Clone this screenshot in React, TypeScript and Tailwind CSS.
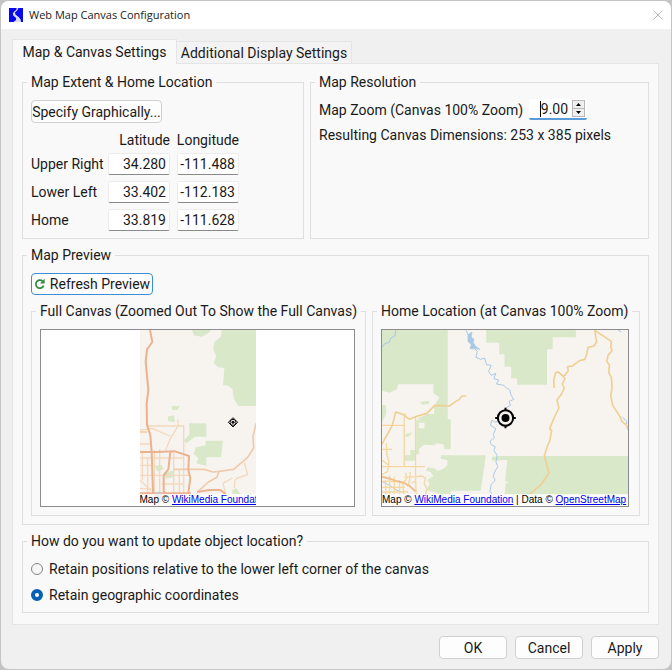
import { useState } from 'react';
import type { ReactNode } from 'react';
import clsx from 'clsx';

type Extent = { name: string; latitude: string; longitude: string };

const initialExtents: Extent[] = [
  { name: 'Upper Right', latitude: '34.280', longitude: '-111.488' },
  { name: 'Lower Left', latitude: '33.402', longitude: '-112.183' },
  { name: 'Home', latitude: '33.819', longitude: '-111.628' },
];

const updateModes = [
  { id: 'relative', label: 'Retain positions relative to the lower left corner of the canvas' },
  { id: 'geographic', label: 'Retain geographic coordinates' },
];

function GroupBox({ title, className, children }: { title: string; className?: string; children: ReactNode }) {
  return (
    <fieldset className={clsx('min-w-0 border border-[#dfdfdf] px-2', className)}>
      <legend className="-ml-1 px-1 h-5 leading-5 whitespace-nowrap">{title}</legend>
      {children}
    </fieldset>
  );
}

function AppLogo() {
  return (
    <svg viewBox="0 0 14 14" className="w-3.5 h-3.5" aria-hidden="true">
      <rect width="14" height="14" fill="#0808f0" />
      <path d="M7.6 0 L9.4 0 L8.6 2 L6 4.6 L6.4 6.6 L9.6 9 L11.6 11.4 L12 14 L4.6 14 L7 12 L7.2 10 L4.2 7.4 L3.8 5.4 L5.2 3.4 L7.4 1.8 Z" fill="#dcdcff" />
    </svg>
  );
}

function RefreshIcon() {
  return (
    <svg viewBox="0 0 12 12" className="w-3 h-3" fill="none" aria-hidden="true">
      <path d="M8.6 3.2 A4 4 0 1 0 9.6 7.6" stroke="#2f8a3c" strokeWidth="1.7" />
      <path d="M10.6 0.8 V5.4 H6 Z" fill="#2f8a3c" />
    </svg>
  );
}

function CanvasMap() {
  return (
    <svg viewBox="27 30 348 528" preserveAspectRatio="none" className="block w-full h-full" fill="none" aria-hidden="true">
      <rect x="27" y="30" width="348" height="528" fill="#f7f4f0" />
      <g fill="#d8e8c8">
        <path d="M272 30 H375 V258 H322 L308 235 L304 206 L288 196 L276 196 L280 144 L262 142 L248 128 L256 108 L247 90 L250 66 L270 50 Z" />
        <path d="M183 30 H240 L232 40 L212 50 L188 46 Z" />
        <path d="M122 258 H146 L140 270 H124 Z M110 290 L128 286 L132 306 L112 304 Z" />
        <path d="M174 310 H226 V350 H192 L166 370 L158 362 L176 342 Z" />
        <path d="M224 362 H276 L270 412 H226 V438 L196 430 L202 414 L188 402 L194 382 L224 376 Z" />
        <path d="M70 438 L92 434 L98 448 L78 454 Z M98 458 L126 452 L130 472 L104 476 Z M304 510 L316 504 L328 522 H304 Z" />
      </g>
      <g stroke="#f4d8be" strokeWidth="4" strokeLinejoin="round">
        <path d="M46 318 H158 V520 M27 330 L66 326 L92 338 L116 348 M140 298 L142 316 L118 356 L104 390 M27 372 H60 M70 390 V520 M86 388 V520 M34 400 V480 M50 410 V520 M27 414 H158 M27 466 H176 M27 436 H60 M128 400 V520 M145 450 V520 M27 480 L60 512 M92 492 H160 M27 506 H60" />
        <path d="M340 428 L350 464 L320 474 L312 480 L310 504 M284 520 L276 490 L304 474" />
      </g>
      <g stroke="#f0cbab" strokeWidth="5" strokeLinejoin="round">
        <path d="M128 448 H220 L246 456 L264 454 L308 448 L350 412 L368 384 L366 350 L375 310 M264 454 L258 472 L232 486 L198 518 M27 336 H48" />
      </g>
      <g stroke="#ebb28f" strokeWidth="6" strokeLinejoin="round">
        <path d="M57 30 L64 66 L48 88 L44 124 L52 210 L47 250 L48 314 L58 346 L62 396 L66 520" />
        <path d="M27 396 H62 L76 396 L132 394 L174 408 L172 450 L178 474 L172 520 M118 396 L112 448 L98 466 L98 512 L104 522 M27 520 H180 M198 516 L236 510 H268 L284 522" />
      </g>
      <circle cx="82" cy="526" r="11" fill="#cbc8c4" />
      <g>
        <path d="M306 293 L320 307 L306 321 L292 307 Z" fill="#f7f4f0" stroke="#111" strokeWidth="3" />
        <circle cx="306" cy="307" r="9" stroke="#111" strokeWidth="3" />
        <circle cx="306" cy="307" r="4.5" fill="#111" />
      </g>
    </svg>
  );
}

function HomeMap() {
  return (
    <svg viewBox="21 90 741 528" preserveAspectRatio="none" className="block w-full h-full" fill="none" aria-hidden="true">
      <rect x="21" y="90" width="741" height="528" fill="#f7f4f0" />
      <g fill="#d8e8c8">
        <path d="M21 90 H219 V358 H228 V448 H208 V434 L188 430 L176 436 L148 434 L132 446 L134 462 L120 464 V482 H90 V466 H106 V450 H124 V358 L158 342 L178 342 V318 L194 292 L176 280 V253 H70 L66 268 L44 278 L21 272 Z" />
        <path d="M21 315 H32 L34 340 L21 366 Z M136 306 L164 302 L162 312 L142 314 Z M94 402 L112 396 L102 410 H90 Z" />
        <path d="M198 466 H334 L330 494 L318 572 H230 L226 584 L198 582 L154 570 L164 552 L158 540 L176 528 L168 516 L154 512 L158 502 L176 504 L190 512 L206 506 L218 496 V480 L198 476 Z" />
        <path d="M335 90 H605 V112 H535 V148 H518 V254 H428 V235 H410 V200 H390 V163 H374 V128 H335 Z" />
        <path d="M352 470 L380 468 H762 V584 H390 L394 550 L404 546 L392 544 L398 480 L352 482 Z" />
      </g>
      <g fill="#f7f4f0">
        <rect x="132" y="368" width="17" height="17" />
        <path d="M124 358 L140 356 L122 362 Z" />
      </g>
      <g stroke="#a9c8e6" strokeWidth="3" strokeLinejoin="round">
        <path d="M62 90 L60 108 L48 114 L42 128 L30 130 L21 142 M274 90 L280 104 M300 146 L308 154 L304 172 L318 178 L330 174 L336 194 L350 196 L342 214 L350 226 L364 220 L358 236 L372 240 L366 252 L388 256 L396 264 L406 270 L410 286 L418 298 L404 304 L408 316 L394 324 L390 340" />
        <path d="M378 364 L360 366 L352 360 L348 376 L364 386 L356 404 L360 412 L346 424 L350 434 L362 440 L358 452 L368 466 L364 486 L370 500 L360 516 L356 530 L362 540 L350 554 L346 574 L354 584" />
        <path d="M732 90 L742 96 M744 350 L758 364 V372" />
        <path d="M280 104 L292 96 L290 112 L298 118 L296 128 L304 140 L316 148 L300 146 L286 146 L290 134 L280 124 Z" fill="#a9c8e6" strokeWidth="2" />
        <path d="M24 546 L48 558 L64 570 L80 576" />
      </g>
      <g stroke="#f4d8a0" strokeWidth="4" strokeLinejoin="round">
        <path d="M21 376 H88 M88 344 V500 M122 350 V530 M21 500 H150 M21 448 H52 M88 340 L94 350 M21 480 L44 498 M34 430 L36 466 L42 484 L38 514 L21 524" />
        <path d="M92 518 L96 534 L84 550 L86 584 M106 516 L104 540 L98 560 M74 540 V584 M58 530 V584 M44 526 V584 M32 540 V584 M21 544 H74 M21 562 H90 M21 576 H100 M88 532 L124 530 L142 528 L152 534 L148 550 L156 566 L152 584 M122 530 L124 584 M110 548 L120 544" />
      </g>
      <g stroke="#f0cf94" strokeWidth="5" strokeLinejoin="round">
        <path d="M21 432 L52 376 L62 336 L76 340 L88 346 L104 358 L122 350 L156 340 L180 316 L224 318 L238 308 L254 298 L262 288 H275" />
        <path d="M662 90 L667 126 L660 138 L642 142 L636 168 L632 178 L616 182 L594 198 L580 200 L582 212 L572 226 L566 228 L552 216 L544 218 L538 240 L540 264 M564 226 L572 236 L564 252 L570 264 L562 282 L548 300 L554 324 L540 352 L526 386 L532 392 L526 424 L520 436 L510 468 L524 518 L500 554 L462 586 M660 90 L712 124 L710 142 L714 152 L702 166 L698 184 L706 196 L704 218 L712 232 L714 262 L710 288 L716 316 L738 350 L744 364 L758 376 L762 390" />
      </g>
      <path d="M21 530 L44 536 L66 544 L86 548 L104 558 L122 574" stroke="#f0bf90" strokeWidth="6" />
      <g>
        <circle cx="393" cy="354" r="23" fill="#f7f4f0" stroke="#000" strokeWidth="6" />
        <circle cx="393" cy="354" r="12" fill="#000" />
        <path d="M393 323 V333 M393 375 V385 M362 354 H372 M414 354 H424" stroke="#000" strokeWidth="6" />
      </g>
    </svg>
  );
}

function Credit({ href, children }: { href: string; children: ReactNode }) {
  return (
    <a href={href} className="text-[#0000ee] underline">
      {children}
    </a>
  );
}

function Attribution({ children }: { children: ReactNode }) {
  return (
    <div className="absolute left-0 bottom-0 w-full h-3 overflow-hidden whitespace-nowrap bg-white/70 font-['Liberation_Sans',sans-serif] text-[10px] leading-3 text-black">
      {children}
    </div>
  );
}

function DialogButton({ children }: { children: ReactNode }) {
  return (
    <button type="button" className="w-[68px] h-[23px] rounded border border-[#d0d0d0] bg-[#fdfdfd] leading-5">
      {children}
    </button>
  );
}

export default function App() {
  const [extents, setExtents] = useState(initialExtents);
  const [zoom, setZoom] = useState(9);
  const [mode, setMode] = useState('geographic');

  const handleExtent = (index: number, key: 'latitude' | 'longitude', value: string) => {
    setExtents(extents.map((extent, i) => (i === index ? { ...extent, [key]: value } : extent)));
  };

  return (
    <div className="bg-[#c4c4c4] p-px font-['Roboto',sans-serif] text-sm text-[#1a1a1a]">
      <main className="rounded-lg overflow-hidden bg-[#f0f0f0]">
        <header className="flex items-center h-7 px-2 bg-white">
          <AppLogo />
          <h1 className="ml-1.5 font-['Open_Sans',sans-serif] text-[11px] leading-4">Web Map Canvas Configuration</h1>
          <button type="button" aria-label="Close" className="ml-auto">
            <svg viewBox="0 0 10 10" className="w-2.5 h-2.5" aria-hidden="true">
              <path d="M0.5 0.5 L9.5 9.5 M9.5 0.5 L0.5 9.5" stroke="#bdbdbd" fill="none" />
            </svg>
          </button>
        </header>

        <div className="pl-[11px] pr-3 pt-2.5 pb-2.5">
          <div role="tablist" className="flex items-end">
            <button type="button" role="tab" aria-selected="true" className="relative z-10 -mb-px h-[25px] w-[165px] border border-b-0 border-[#e5e5e5] bg-[#f9f9f9] whitespace-nowrap">
              Map &amp; Canvas Settings
            </button>
            <button type="button" role="tab" aria-selected="false" className="h-[22px] w-[175px] border border-b-0 border-l-0 border-[#e5e5e5] bg-[#f3f3f3] whitespace-nowrap">
              Additional Display Settings
            </button>
          </div>

          <div role="tabpanel" className="flex flex-col gap-1.5 border border-[#e5e5e5] bg-[#f9f9f9] px-[9px] pt-2 pb-[11px]">
            <div className="flex gap-1.5">
              <GroupBox title="Map Extent & Home Location" className="w-[282px] shrink-0 pb-1">
                <button type="button" className="block mt-2 h-[23px] w-[131px] rounded border border-[#d0d0d0] bg-[#fdfdfd] leading-5 whitespace-nowrap">
                  Specify Graphically...
                </button>
                <table className="mt-1.5 border-collapse">
                  <thead>
                    <tr className="h-[21px] leading-5">
                      <td className="w-[77px] p-0" />
                      <th scope="col" className="w-[62px] p-0 font-normal text-right">Latitude</th>
                      <th scope="col" className="w-[69px] p-0 font-normal text-right">Longitude</th>
                    </tr>
                  </thead>
                  <tbody>
                    {extents.map((extent, i) => (
                      <tr key={extent.name} className="h-7">
                        <th scope="row" className="p-0 font-normal text-left whitespace-nowrap">{extent.name}</th>
                        <td className="p-0">
                          <input
                            aria-label={`${extent.name} latitude`}
                            value={extent.latitude}
                            onChange={(e) => handleExtent(i, 'latitude', e.target.value)}
                            className="block w-[62px] h-[22px] rounded-xs border border-[#ececec] border-b-[#8a8a8a] bg-white pr-[3px] text-right"
                          />
                        </td>
                        <td className="p-0">
                          <input
                            aria-label={`${extent.name} longitude`}
                            value={extent.longitude}
                            onChange={(e) => handleExtent(i, 'longitude', e.target.value)}
                            className="block ml-auto w-[62px] h-[22px] rounded-xs border border-[#ececec] border-b-[#8a8a8a] bg-white pr-[3px] text-right"
                          />
                        </td>
                      </tr>
                    ))}
                  </tbody>
                </table>
              </GroupBox>

              <GroupBox title="Map Resolution" className="flex-1">
                <div className="mt-[7px] flex items-center gap-1.5 whitespace-nowrap">
                  <label htmlFor="map-zoom">Map Zoom (Canvas 100% Zoom)</label>
                  <div className="relative flex items-center h-[21px] w-[58px] rounded-xs border-b-2 border-[#5b9bd8] bg-white">
                    <input
                      id="map-zoom"
                      value={zoom.toFixed(2)}
                      onChange={(e) => setZoom(Number(e.target.value) || 0)}
                      className="w-[39px] h-[19px] text-right outline-none"
                    />
                    <span className="absolute left-[11px] top-0.5 h-4 w-px bg-black" />
                    <span className="ml-auto mr-0.5 flex flex-col">
                      <button type="button" aria-label="Zoom in" onClick={() => setZoom(zoom + 1)} className="flex items-center justify-center w-[13px] h-[9px] border border-[#b8b8b8] bg-[#efefef]">
                        <svg viewBox="0 0 5 3" className="w-[5px] h-[3px]" aria-hidden="true"><path d="M0 3 L2.5 0 L5 3 Z" /></svg>
                      </button>
                      <button type="button" aria-label="Zoom out" onClick={() => setZoom(zoom - 1)} className="flex items-center justify-center w-[13px] h-2 border border-t-0 border-[#b8b8b8] bg-[#efefef]">
                        <svg viewBox="0 0 5 3" className="w-[5px] h-[3px]" aria-hidden="true"><path d="M0 0 L2.5 3 L5 0 Z" /></svg>
                      </button>
                    </span>
                  </div>
                </div>
                <p className="mt-[5px] leading-5 whitespace-nowrap">Resulting Canvas Dimensions: 253 x 385 pixels</p>
              </GroupBox>
            </div>

            <GroupBox title="Map Preview" className="pb-2">
              <button type="button" className="mt-2 flex items-center justify-center gap-1 h-[22px] w-[122px] rounded border border-[#3c8fd6] bg-[#fdfdfd] leading-5 whitespace-nowrap">
                <RefreshIcon />
                Refresh Preview
              </button>
              <div className="mt-1.5 grid grid-cols-[5fr_4fr] gap-1.5">
                <GroupBox title="Full Canvas (Zoomed Out To Show the Full Canvas)" className="pb-2">
                  <div className="mt-2 mr-0.5 h-[178px] border border-[#8c8c90] bg-white">
                    <div className="relative mx-auto w-[116px] h-full overflow-hidden">
                      <CanvasMap />
                      <Attribution>
                        Map © <Credit href="#wikimedia">WikiMedia Foundation</Credit>
                      </Attribution>
                    </div>
                  </div>
                </GroupBox>
                <GroupBox title="Home Location (at Canvas 100% Zoom)" className="pb-2">
                  <div className="relative mt-2 mr-0.5 h-[178px] overflow-hidden border border-[#8c8c90] bg-white">
                    <HomeMap />
                    <Attribution>
                      Map © <Credit href="#wikimedia">WikiMedia Foundation</Credit> | Data ©{' '}
                      <Credit href="#openstreetmap">OpenStreetMap</Credit>
                    </Attribution>
                  </div>
                </GroupBox>
              </div>
            </GroupBox>

            <GroupBox title="How do you want to update object location?" className="pb-[7px]">
              <div className="mt-2 flex flex-col gap-1.5">
                {updateModes.map((item) => (
                  <label key={item.id} className="flex items-center gap-1.5 leading-5">
                    <input
                      type="radio"
                      name="update-mode"
                      checked={mode === item.id}
                      onChange={() => setMode(item.id)}
                      className="appearance-none w-3 h-3 rounded-full border border-[#858585] bg-[#f6f6f6] checked:border-4 checked:border-[#0560b6] checked:bg-white"
                    />
                    {item.label}
                  </label>
                ))}
              </div>
            </GroupBox>
          </div>

          <div className="mt-[11px] flex justify-end gap-2">
            <DialogButton>OK</DialogButton>
            <DialogButton>Cancel</DialogButton>
            <DialogButton>Apply</DialogButton>
          </div>
        </div>
      </main>
    </div>
  );
}
